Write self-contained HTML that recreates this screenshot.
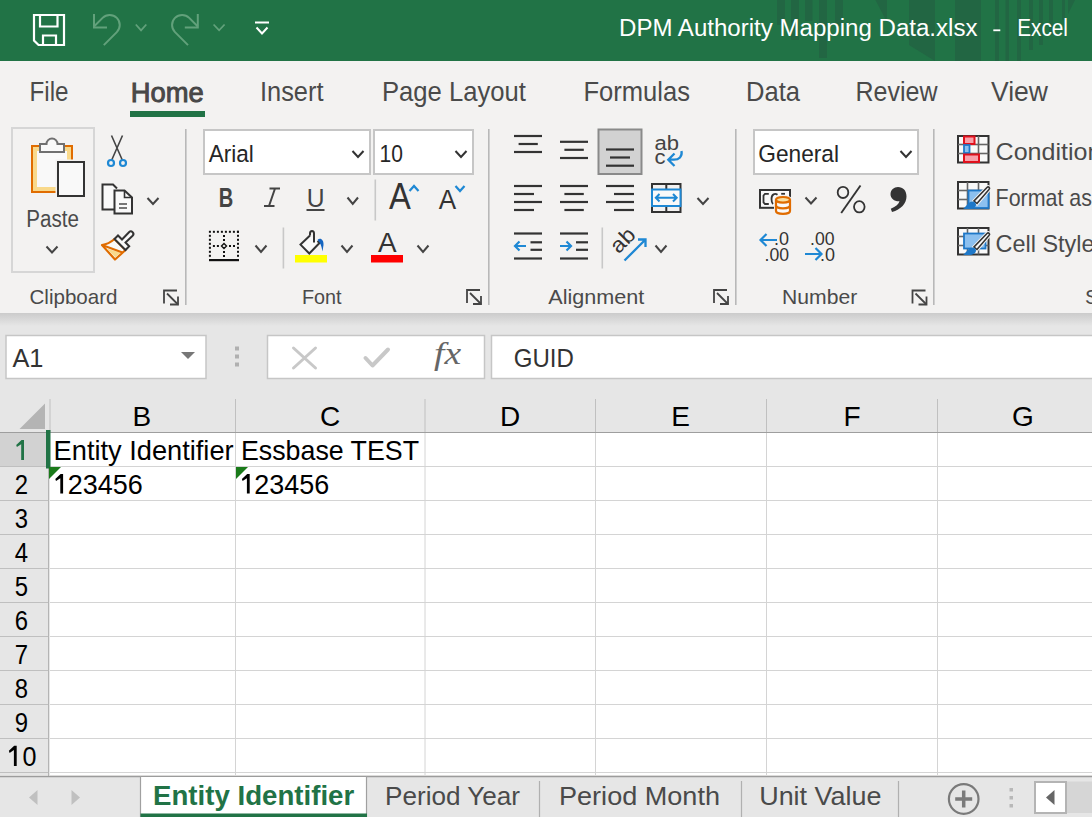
<!DOCTYPE html>
<html><head><meta charset="utf-8"><title>Excel</title>
<style>html,body{margin:0;padding:0;width:1092px;height:817px;overflow:hidden;background:#f3f2f1;font-family:"Liberation Sans",sans-serif;}</style>
</head><body><svg width="1092" height="817" viewBox="0 0 1092 817" font-family='"Liberation Sans", sans-serif' style="display:block"><rect x="0" y="0" width="1092" height="61" fill="#217346" />
<rect x="777" y="0" width="8" height="25" fill="#226643" />
<rect x="791" y="0" width="8" height="40" fill="#226643" />
<rect x="805" y="0" width="7.5" height="21" fill="#226643" />
<rect x="819" y="0" width="8" height="58" fill="#226643" />
<rect x="835" y="0" width="8" height="26" fill="#226643" />
<rect x="995" y="0" width="4" height="61" fill="#226643" />
<rect x="1005.5" y="0" width="3.5" height="61" fill="#226643" />
<rect x="1017" y="0" width="4" height="61" fill="#226643" />
<rect x="1029" y="0" width="4" height="50" fill="#226643" />
<rect x="1039" y="0" width="4" height="45" fill="#226643" />
<rect x="1049" y="0" width="4" height="35" fill="#226643" />
<rect x="1062" y="0" width="3" height="20" fill="#226643" />
<path d="M875.4,0 H887 V22 Z" stroke="none" stroke-width="1" fill="#226643" />
<path d="M909,0 H935 V61 L909,45 Z" stroke="none" stroke-width="1" fill="#226643" />
<rect x="955" y="0" width="26" height="61" fill="#226643" />
<path d="M1068,0 L1075,0 L1068,14 Z" stroke="none" stroke-width="1" fill="#226643" />
<path d="M34,15 H64 V45 H38.5 L34,40.5 Z" stroke="#fff" stroke-width="2.2" fill="none" />
<path d="M40,15 V26.5 H57.5 V15" stroke="#fff" stroke-width="2.2" fill="none" />
<path d="M43,45 V35.5 H56 V45" stroke="#fff" stroke-width="2.2" fill="none" />
<path d="M94,14 V27.5 H107" stroke="#62a17b" stroke-width="2" fill="none" />
<path d="M94,26.5 L102.6,17.9 A10,10 0 0 1 116.8,32.1 L103.8,45.1" stroke="#62a17b" stroke-width="2" fill="none" />
<path d="M197.8,14 V27.5 H184.8" stroke="#62a17b" stroke-width="2" fill="none" />
<path d="M197.8,26.5 L189.2,17.9 A10,10 0 0 0 175,32.1 L188,45.1" stroke="#62a17b" stroke-width="2" fill="none" />
<path d="M135.8,24.5 L141.05,30.3 L146.3,24.5" stroke="#62a17b" stroke-width="1.8" fill="none" stroke-linecap="butt" stroke-linejoin="miter"/>
<path d="M213.6,24.5 L219.1,30.3 L224.6,24.5" stroke="#62a17b" stroke-width="1.8" fill="none" stroke-linecap="butt" stroke-linejoin="miter"/>
<line x1="255" y1="22.5" x2="269" y2="22.5" stroke="#fff" stroke-width="2" />
<path d="M256.5,27.5 L262.0,33.5 L267.5,27.5" stroke="#fff" stroke-width="2" fill="none" stroke-linecap="butt" stroke-linejoin="miter"/>
<text x="619" y="36" font-size="23.5" fill="#ffffff" font-weight="normal" text-anchor="start" textLength="358.5" lengthAdjust="spacingAndGlyphs" >DPM Authority Mapping Data.xlsx</text>
<rect x="993.3" y="29.4" width="7" height="1.8" fill="#ffffff" />
<text x="1017.2" y="36" font-size="23.5" fill="#ffffff" font-weight="normal" text-anchor="start" textLength="50.8" lengthAdjust="spacingAndGlyphs" >Excel</text>
<rect x="0" y="61" width="1092" height="252" fill="#f3f2f1" />
<text x="29.5" y="101.3" font-size="27.5" fill="#4a4a4a" font-weight="normal" text-anchor="start" textLength="39" lengthAdjust="spacingAndGlyphs" >File</text>
<text x="260" y="101.3" font-size="27.5" fill="#4a4a4a" font-weight="normal" text-anchor="start" textLength="63.5" lengthAdjust="spacingAndGlyphs" >Insert</text>
<text x="382" y="101.3" font-size="27.5" fill="#4a4a4a" font-weight="normal" text-anchor="start" textLength="144" lengthAdjust="spacingAndGlyphs" >Page Layout</text>
<text x="583.5" y="101.3" font-size="27.5" fill="#4a4a4a" font-weight="normal" text-anchor="start" textLength="106.5" lengthAdjust="spacingAndGlyphs" >Formulas</text>
<text x="746" y="101.3" font-size="27.5" fill="#4a4a4a" font-weight="normal" text-anchor="start" textLength="54" lengthAdjust="spacingAndGlyphs" >Data</text>
<text x="855.5" y="101.3" font-size="27.5" fill="#4a4a4a" font-weight="normal" text-anchor="start" textLength="82" lengthAdjust="spacingAndGlyphs" >Review</text>
<text x="991" y="101.3" font-size="27.5" fill="#4a4a4a" font-weight="normal" text-anchor="start" textLength="57" lengthAdjust="spacingAndGlyphs" >View</text>
<text x="130.8" y="101.5" font-size="27.5" fill="#4a4a4a" font-weight="normal" text-anchor="start" textLength="73" lengthAdjust="spacingAndGlyphs" stroke="#444" stroke-width="0.9">Home</text>
<rect x="130" y="111" width="75" height="6" fill="#217346" />
<rect x="185" y="129" width="1.6" height="176" fill="#b8b8b8" />
<rect x="488" y="129" width="1.6" height="176" fill="#b8b8b8" />
<rect x="735" y="129" width="1.6" height="176" fill="#b8b8b8" />
<rect x="933" y="129" width="1.6" height="176" fill="#b8b8b8" />
<text x="29.5" y="303.6" font-size="21" fill="#4a4a4a" font-weight="normal" text-anchor="start" textLength="88" lengthAdjust="spacingAndGlyphs" >Clipboard</text>
<text x="302" y="303.6" font-size="21" fill="#4a4a4a" font-weight="normal" text-anchor="start" textLength="39.6" lengthAdjust="spacingAndGlyphs" >Font</text>
<text x="548.3" y="303.6" font-size="21" fill="#4a4a4a" font-weight="normal" text-anchor="start" textLength="96" lengthAdjust="spacingAndGlyphs" >Alignment</text>
<text x="782" y="303.8" font-size="21" fill="#4a4a4a" font-weight="normal" text-anchor="start" textLength="75.2" lengthAdjust="spacingAndGlyphs" >Number</text>
<text x="1085" y="303.8" font-size="21" fill="#4a4a4a" font-weight="normal" text-anchor="start" >S</text>
<path d="M164,303.5 V290.5 H177" stroke="#444444" stroke-width="1.8" fill="none" />
<path d="M167,293.5 L178,304.5" stroke="#444444" stroke-width="1.8" fill="none" />
<path d="M178,296.5 V304.5 H170" stroke="#444444" stroke-width="1.8" fill="none" />
<path d="M467,303 V290 H480" stroke="#444444" stroke-width="1.8" fill="none" />
<path d="M470,293 L481,304" stroke="#444444" stroke-width="1.8" fill="none" />
<path d="M481,296 V304 H473" stroke="#444444" stroke-width="1.8" fill="none" />
<path d="M714,303 V290 H727" stroke="#444444" stroke-width="1.8" fill="none" />
<path d="M717,293 L728,304" stroke="#444444" stroke-width="1.8" fill="none" />
<path d="M728,296 V304 H720" stroke="#444444" stroke-width="1.8" fill="none" />
<path d="M912.5,303.5 V290.5 H925.5" stroke="#444444" stroke-width="1.8" fill="none" />
<path d="M915.5,293.5 L926.5,304.5" stroke="#444444" stroke-width="1.8" fill="none" />
<path d="M926.5,296.5 V304.5 H918.5" stroke="#444444" stroke-width="1.8" fill="none" />
<rect x="12" y="128" width="82" height="144" fill="none" stroke="#d6d6d6" stroke-width="2"/>
<rect x="32" y="146" width="40" height="46" fill="#f9d98b" stroke="#e06c00" stroke-width="2"/>
<rect x="37" y="151" width="30" height="36" fill="#f9f9f9" />
<path d="M40,152 V144 H46.5 A5.5,5.5 0 0 1 57.5,144 H64 V152 Z" stroke="#707070" stroke-width="2" fill="#f9f9f9" />
<rect x="55.5" y="159.5" width="31" height="38.5" fill="#f3f2f1" />
<rect x="58" y="162" width="26" height="34" fill="#f9f9f9" stroke="#333" stroke-width="2"/>
<text x="26.3" y="227" font-size="23.5" fill="#4a4a4a" font-weight="normal" text-anchor="start" textLength="52.6" lengthAdjust="spacingAndGlyphs" >Paste</text>
<path d="M46.5,246.5 L52.0,252.5 L57.5,246.5" stroke="#444444" stroke-width="2" fill="none" stroke-linecap="butt" stroke-linejoin="miter"/>
<path d="M111.5,135.5 L122.5,160.5 M122.5,135.5 L111.5,160.5" stroke="#444444" stroke-width="1.6" fill="none" />
<circle cx="111" cy="163" r="3" fill="none" stroke="#1e88d4" stroke-width="2.2"/>
<circle cx="123" cy="163" r="3" fill="none" stroke="#1e88d4" stroke-width="2.2"/>
<path d="M115.5,209.5 H102.5 V184.5 H113 L117,188.5" stroke="#333" stroke-width="2" fill="#f9f9f9" />
<path d="M114.5,190.5 H124.5 L132,197.5 V213.5 H114.5 Z" stroke="#333" stroke-width="2" fill="#f9f9f9" />
<path d="M124.5,190.5 V197.5 H132" stroke="#333" stroke-width="1.6" fill="none" />
<line x1="119" y1="204" x2="127" y2="204" stroke="#555" stroke-width="1.6" />
<line x1="119" y1="208" x2="127" y2="208" stroke="#555" stroke-width="1.6" />
<path d="M147.5,198 L153.0,204 L158.5,198" stroke="#444444" stroke-width="2" fill="none" stroke-linecap="butt" stroke-linejoin="miter"/>
<path d="M114.5,239 C110,243 106,244.5 102,245 L115,259.5 L125.5,250 Z" stroke="#e06c00" stroke-width="2.2" fill="#f9f9f9" stroke-linejoin="round"/>
<path d="M106.5,248.5 L121,252.8 L115.3,257.3 Z" stroke="none" stroke-width="1" fill="#f9d98b" />
<path d="M102,245 L122.5,252.5" stroke="#e06c00" stroke-width="2" fill="none" />
<path d="M114.5,239 L118,235.5 L122,239.5 L129,232.2 C130,231.2 131.6,231.2 132.6,232.2 C133.6,233.2 133.6,234.8 132.6,235.8 L125.5,242.5 L129.2,246.3 L125.5,250 Z" stroke="#333" stroke-width="2" fill="#f9f9f9" />
<rect x="204" y="130" width="166" height="44" fill="#ffffff" stroke="#c6c6c6" stroke-width="2"/>
<rect x="374" y="130" width="99" height="44" fill="#ffffff" stroke="#c6c6c6" stroke-width="2"/>
<text x="208.7" y="161.5" font-size="24.5" fill="#262626" font-weight="normal" text-anchor="start" textLength="45" lengthAdjust="spacingAndGlyphs" >Arial</text>
<text x="379.6" y="161.5" font-size="24.5" fill="#262626" font-weight="normal" text-anchor="start" textLength="23.4" lengthAdjust="spacingAndGlyphs" >10</text>
<path d="M352.5,151 L358.0,157 L363.5,151" stroke="#333" stroke-width="2" fill="none" stroke-linecap="butt" stroke-linejoin="miter"/>
<path d="M455.5,151 L461.0,157 L466.5,151" stroke="#333" stroke-width="2" fill="none" stroke-linecap="butt" stroke-linejoin="miter"/>
<text x="218.8" y="206.6" font-size="27" fill="#444" font-weight="bold" text-anchor="start" textLength="14.5" lengthAdjust="spacingAndGlyphs" >B</text>
<path d="M269.5,188.5 H280 M264,206 H274.5 M275,188.5 L269,206" stroke="#444" stroke-width="2" fill="none" />
<text x="306.8" y="206.6" font-size="26" fill="#444" font-weight="normal" text-anchor="start" textLength="17.8" lengthAdjust="spacingAndGlyphs" >U</text>
<rect x="306.5" y="209" width="18" height="2" fill="#444" />
<path d="M347.5,197.5 L352.75,204 L358,197.5" stroke="#444444" stroke-width="2" fill="none" stroke-linecap="butt" stroke-linejoin="miter"/>
<rect x="374.5" y="179.5" width="1.6" height="41" fill="#c8c8c8" />
<text x="389" y="208.8" font-size="37.5" fill="#333" font-weight="normal" text-anchor="start" textLength="21.8" lengthAdjust="spacingAndGlyphs" >A</text>
<path d="M409.5,191 L414.0,186 L418.5,191" stroke="#1e88d4" stroke-width="2.2" fill="none" stroke-linecap="butt" stroke-linejoin="miter"/>
<text x="438.8" y="208.8" font-size="27.5" fill="#333" font-weight="normal" text-anchor="start" textLength="17.4" lengthAdjust="spacingAndGlyphs" >A</text>
<path d="M455.5,186 L460.0,191 L464.5,186" stroke="#1e88d4" stroke-width="2.2" fill="none" stroke-linecap="butt" stroke-linejoin="miter"/>
<rect x="216.9" y="230.8" width="2" height="2" fill="#111" />
<rect x="237" y="234.8" width="2" height="2" fill="#111" />
<rect x="223" y="255" width="2" height="2" fill="#111" />
<rect x="237" y="246.8" width="2" height="2" fill="#111" />
<rect x="212.9" y="245" width="2" height="2" fill="#111" />
<rect x="220.9" y="230.8" width="2" height="2" fill="#111" />
<rect x="208.9" y="234.8" width="2" height="2" fill="#111" />
<rect x="208.9" y="246.8" width="2" height="2" fill="#111" />
<rect x="224.9" y="230.8" width="2" height="2" fill="#111" />
<rect x="223" y="239" width="2" height="2" fill="#111" />
<rect x="237" y="230.8" width="2" height="2" fill="#111" />
<rect x="223" y="251" width="2" height="2" fill="#111" />
<rect x="237" y="242.8" width="2" height="2" fill="#111" />
<rect x="228.9" y="230.8" width="2" height="2" fill="#111" />
<rect x="216.9" y="245" width="2" height="2" fill="#111" />
<rect x="208.9" y="230.8" width="2" height="2" fill="#111" />
<rect x="237" y="254.8" width="2" height="2" fill="#111" />
<rect x="212.9" y="230.8" width="2" height="2" fill="#111" />
<rect x="208.9" y="242.8" width="2" height="2" fill="#111" />
<rect x="208.9" y="254.8" width="2" height="2" fill="#111" />
<rect x="229" y="245" width="2" height="2" fill="#111" />
<rect x="223" y="235" width="2" height="2" fill="#111" />
<rect x="232.9" y="230.8" width="2" height="2" fill="#111" />
<rect x="237" y="238.8" width="2" height="2" fill="#111" />
<rect x="236.9" y="230.8" width="2" height="2" fill="#111" />
<rect x="237" y="250.8" width="2" height="2" fill="#111" />
<rect x="208.9" y="238.8" width="2" height="2" fill="#111" />
<rect x="233" y="245" width="2" height="2" fill="#111" />
<rect x="208.9" y="250.8" width="2" height="2" fill="#111" />
<path d="M224,243.5 L226.5,246 L224,248.5 L221.5,246 Z" stroke="#111" stroke-width="1.4" fill="none" />
<rect x="209" y="259" width="30" height="2.2" fill="#111" />
<path d="M255.5,245.5 L261.0,252 L266.5,245.5" stroke="#444444" stroke-width="2" fill="none" stroke-linecap="butt" stroke-linejoin="miter"/>
<rect x="282.6" y="227.5" width="1.6" height="41" fill="#c8c8c8" />
<path d="M310,235.5 L300.5,244.6 L309.3,253.5 L319.5,243 L317.5,241" stroke="#333" stroke-width="2" fill="#f9f9f9" />
<path d="M310,235.5 V233.5 C310,230 314,230 314,233.5 V242.5" stroke="#333" stroke-width="2" fill="none" />
<path d="M317.5,240 C320,237 324,239.5 323.5,245 L322.5,251.5 C321.5,246 320.5,243 317.5,240 Z" stroke="none" stroke-width="1" fill="#1565c0" />
<rect x="295" y="255" width="32" height="7.5" fill="#ffff00" />
<path d="M341.5,245.5 L347.0,252 L352.5,245.5" stroke="#444444" stroke-width="2" fill="none" stroke-linecap="butt" stroke-linejoin="miter"/>
<text x="378" y="252.3" font-size="27.5" fill="#333" font-weight="normal" text-anchor="start" textLength="18.6" lengthAdjust="spacingAndGlyphs" >A</text>
<rect x="371" y="255" width="32" height="7.5" fill="#ff0000" />
<path d="M417.5,245.5 L423.0,252 L428.5,245.5" stroke="#444444" stroke-width="2" fill="none" stroke-linecap="butt" stroke-linejoin="miter"/>
<line x1="514" y1="136" x2="542" y2="136" stroke="#333" stroke-width="2.2" />
<line x1="518.6" y1="144" x2="537.8" y2="144" stroke="#333" stroke-width="2.2" />
<line x1="514" y1="152" x2="542" y2="152" stroke="#333" stroke-width="2.2" />
<line x1="560" y1="141.8" x2="588" y2="141.8" stroke="#333" stroke-width="2.2" />
<line x1="564.4" y1="149.8" x2="583.8" y2="149.8" stroke="#333" stroke-width="2.2" />
<line x1="560" y1="158" x2="588" y2="158" stroke="#333" stroke-width="2.2" />
<rect x="598.5" y="129.5" width="43" height="44.5" fill="#d2d2d2" stroke="#8a8a8a" stroke-width="2"/>
<line x1="606" y1="149.5" x2="634" y2="149.5" stroke="#333" stroke-width="2.2" />
<line x1="610" y1="157.5" x2="630" y2="157.5" stroke="#333" stroke-width="2.2" />
<line x1="606" y1="165.7" x2="634" y2="165.7" stroke="#333" stroke-width="2.2" />
<text x="654.5" y="150.3" font-size="20" fill="#444" font-weight="normal" text-anchor="start" textLength="24.5" lengthAdjust="spacingAndGlyphs" >ab</text>
<text x="654.5" y="164.4" font-size="20" fill="#444" font-weight="normal" text-anchor="start" textLength="11" lengthAdjust="spacingAndGlyphs" >c</text>
<path d="M681.5,151 C682.5,156.5 679,159.7 674,159.7 H668.5 M674.5,153.5 L668.3,159.7 L674.5,166" stroke="#1e88d4" stroke-width="2.3" fill="none" />
<line x1="514" y1="186" x2="542" y2="186" stroke="#333" stroke-width="2.2" />
<line x1="514" y1="194" x2="534" y2="194" stroke="#333" stroke-width="2.2" />
<line x1="514" y1="202" x2="542" y2="202" stroke="#333" stroke-width="2.2" />
<line x1="514" y1="210" x2="534" y2="210" stroke="#333" stroke-width="2.2" />
<line x1="560" y1="186" x2="588" y2="186" stroke="#333" stroke-width="2.2" />
<line x1="564.4" y1="194" x2="583.8" y2="194" stroke="#333" stroke-width="2.2" />
<line x1="560" y1="202" x2="588" y2="202" stroke="#333" stroke-width="2.2" />
<line x1="564.4" y1="210" x2="583.8" y2="210" stroke="#333" stroke-width="2.2" />
<line x1="606" y1="186" x2="634" y2="186" stroke="#333" stroke-width="2.2" />
<line x1="614" y1="194" x2="634" y2="194" stroke="#333" stroke-width="2.2" />
<line x1="606" y1="202" x2="634" y2="202" stroke="#333" stroke-width="2.2" />
<line x1="614" y1="210" x2="634" y2="210" stroke="#333" stroke-width="2.2" />
<rect x="652" y="184" width="28.5" height="28" fill="none" stroke="#333" stroke-width="2"/>
<line x1="666.3" y1="184" x2="666.3" y2="212" stroke="#333" stroke-width="2" />
<rect x="652" y="189.5" width="28.5" height="16.5" fill="#f9f9f9" stroke="#1e88d4" stroke-width="2"/>
<path d="M656,197.75 H676.5 M659.5,194 L655.8,197.75 L659.5,201.5 M673,194 L676.7,197.75 L673,201.5" stroke="#1e88d4" stroke-width="2" fill="none" />
<path d="M697.5,198 L703.0,204 L708.5,198" stroke="#444444" stroke-width="2" fill="none" stroke-linecap="butt" stroke-linejoin="miter"/>
<line x1="514" y1="233.5" x2="542" y2="233.5" stroke="#333" stroke-width="2.2" />
<line x1="530.5" y1="242.3" x2="542" y2="242.3" stroke="#333" stroke-width="2.2" />
<line x1="530.5" y1="249.8" x2="542" y2="249.8" stroke="#333" stroke-width="2.2" />
<line x1="514" y1="258.5" x2="542" y2="258.5" stroke="#333" stroke-width="2.2" />
<path d="M526,246 H515 M519.5,241.5 L515,246 L519.5,250.5" stroke="#1e88d4" stroke-width="2.2" fill="none" />
<line x1="560" y1="233.5" x2="588" y2="233.5" stroke="#333" stroke-width="2.2" />
<line x1="576" y1="242.3" x2="588" y2="242.3" stroke="#333" stroke-width="2.2" />
<line x1="576" y1="249.8" x2="588" y2="249.8" stroke="#333" stroke-width="2.2" />
<line x1="560" y1="258.5" x2="588" y2="258.5" stroke="#333" stroke-width="2.2" />
<path d="M560,246 H571 M566.5,241.5 L571,246 L566.5,250.5" stroke="#1e88d4" stroke-width="2.2" fill="none" />
<rect x="601.5" y="227.5" width="1.6" height="41" fill="#c8c8c8" />
<text x="0" y="0" font-size="21.5" fill="#333" font-weight="normal" text-anchor="start" textLength="26" lengthAdjust="spacingAndGlyphs" transform="translate(618.5,254.5) rotate(-45)">ab</text>
<path d="M624.5,260.5 L645.5,239.5 M638,239.5 H645.5 V247" stroke="#1e88d4" stroke-width="2.3" fill="none" />
<path d="M655.5,245.5 L661.0,252 L666.5,245.5" stroke="#444444" stroke-width="2" fill="none" stroke-linecap="butt" stroke-linejoin="miter"/>
<rect x="754" y="130" width="164" height="44" fill="#ffffff" stroke="#c6c6c6" stroke-width="2"/>
<text x="758.3" y="161.6" font-size="24.5" fill="#262626" font-weight="normal" text-anchor="start" textLength="80.7" lengthAdjust="spacingAndGlyphs" >General</text>
<path d="M900.5,151 L906.0,157 L911.5,151" stroke="#333" stroke-width="2" fill="none" stroke-linecap="butt" stroke-linejoin="miter"/>
<rect x="760" y="190" width="30" height="17.8" fill="#f9f9f9" stroke="#333" stroke-width="2"/>
<path d="M768.8,193.8 H765 L763.5,195.5 V202.5 L765,204 H768.8" stroke="#333" stroke-width="1.8" fill="none" />
<path d="M777.5,194.8 C775,193 771.5,194 771.5,199 C771.5,202 772.5,203.5 773,204" stroke="#333" stroke-width="1.8" fill="none" />
<line x1="781.2" y1="193.8" x2="785" y2="193.8" stroke="#333" stroke-width="1.8" />
<path d="M776,199.8 V211 A7,2.8 0 0 0 790,211 V199.8 A7,2.8 0 0 0 776,199.8" stroke="#f3f2f1" stroke-width="4" fill="#f9f9f9" />
<path d="M776,199.8 V211 A7,2.8 0 0 0 790,211 V199.8" stroke="#e06c00" stroke-width="2.2" fill="#f9f9f9" />
<ellipse cx="783" cy="199.8" rx="7" ry="2.8" fill="#f9e0a0" stroke="#e06c00" stroke-width="2.2"/>
<path d="M776,205.5 A7,2.8 0 0 0 790,205.5" stroke="#e06c00" stroke-width="2.2" fill="none" />
<path d="M805.5,197.5 L811.0,203.5 L816.5,197.5" stroke="#444444" stroke-width="2" fill="none" stroke-linecap="butt" stroke-linejoin="miter"/>
<ellipse cx="843" cy="192.4" rx="5.3" ry="5.6" fill="none" stroke="#333" stroke-width="1.8"/>
<ellipse cx="859.3" cy="206.8" rx="5.3" ry="5.6" fill="none" stroke="#333" stroke-width="1.8"/>
<line x1="860.5" y1="185.5" x2="841.2" y2="213" stroke="#333" stroke-width="1.9" />
<path d="M898,187 C903,187 906.5,190.5 906.5,196.5 C906.5,203.5 901,209.5 892,212 L890.8,208.8 C896,206.5 898.8,204 899.5,201.2 C894.5,201.5 890.5,198.5 890.5,194.2 C890.5,190 894,187 898,187 Z" stroke="none" stroke-width="1" fill="#333" />
<text x="774" y="244.7" font-size="18" fill="#333" font-weight="normal" text-anchor="start" textLength="15" lengthAdjust="spacingAndGlyphs" >.0</text>
<text x="764.5" y="260.7" font-size="18" fill="#333" font-weight="normal" text-anchor="start" textLength="24.5" lengthAdjust="spacingAndGlyphs" >.00</text>
<path d="M777,240 H761 M766.5,234 L760.5,240 L766.5,246" stroke="#1e88d4" stroke-width="2.2" fill="none" />
<text x="810" y="244.7" font-size="18" fill="#333" font-weight="normal" text-anchor="start" textLength="24.5" lengthAdjust="spacingAndGlyphs" >.00</text>
<text x="820" y="260.7" font-size="18" fill="#333" font-weight="normal" text-anchor="start" textLength="15" lengthAdjust="spacingAndGlyphs" >.0</text>
<path d="M805,254 H821.5 M815.5,248 L821.5,254 L815.5,260" stroke="#1e88d4" stroke-width="2.2" fill="none" />
<rect x="958" y="136" width="30.5" height="26.5" fill="#f9f9f9" stroke="#333" stroke-width="2"/>
<line x1="967.5" y1="136" x2="967.5" y2="162.5" stroke="#666" stroke-width="1.6" />
<line x1="978.5" y1="136" x2="978.5" y2="162.5" stroke="#666" stroke-width="1.6" />
<line x1="958" y1="144.5" x2="988.5" y2="144.5" stroke="#666" stroke-width="1.6" />
<line x1="958" y1="153.5" x2="988.5" y2="153.5" stroke="#666" stroke-width="1.6" />
<rect x="964" y="136.5" width="10.5" height="7.5" fill="#f8a0aa" stroke="#e0101c" stroke-width="2"/>
<rect x="964" y="145" width="5.5" height="8" fill="#8cc0ef" stroke="#1e78c8" stroke-width="1.8"/>
<rect x="964" y="154.5" width="15" height="7.5" fill="#f8a0aa" stroke="#e0101c" stroke-width="2"/>
<text x="995.6" y="160" font-size="24" fill="#4a4a4a" font-weight="normal" text-anchor="start" textLength="252" lengthAdjust="spacingAndGlyphs" >Conditional Formatting</text>
<rect x="958" y="182" width="30.5" height="26.5" fill="#f9f9f9" stroke="#333" stroke-width="2"/>
<line x1="967.5" y1="182" x2="967.5" y2="208.5" stroke="#666" stroke-width="1.6" />
<line x1="978.5" y1="182" x2="978.5" y2="208.5" stroke="#666" stroke-width="1.6" />
<line x1="958" y1="190.5" x2="988.5" y2="190.5" stroke="#666" stroke-width="1.6" />
<line x1="958" y1="199.5" x2="988.5" y2="199.5" stroke="#666" stroke-width="1.6" />
<rect x="968.5" y="190.5" width="20" height="17.5" fill="#8cc0ef" stroke="#1e78c8" stroke-width="1.8"/>
<path d="M987,187.5 C988.5,186 990.5,188 989,189.5 L977,203.5 L974,201 Z" stroke="#f3f2f1" stroke-width="3.5" fill="#f9f9f9" />
<path d="M987,187.5 C988.5,186 990.5,188 989,189.5 L977,203.5 L974,201 Z" stroke="#333" stroke-width="1.6" fill="#f9f9f9" />
<path d="M963,208.5 C966,207.5 968,201 973,201.5 C976,202 977,205 975,207 C972,209.5 967,209.5 963,208.5 Z" stroke="none" stroke-width="1" fill="#1e78c8" />
<text x="995.6" y="205.7" font-size="24" fill="#4a4a4a" font-weight="normal" text-anchor="start" textLength="153" lengthAdjust="spacingAndGlyphs" >Format as Table</text>
<rect x="958" y="228" width="30.5" height="26.5" fill="#f9f9f9" stroke="#333" stroke-width="2"/>
<line x1="967.5" y1="228" x2="967.5" y2="254.5" stroke="#666" stroke-width="1.6" />
<line x1="978.5" y1="228" x2="978.5" y2="254.5" stroke="#666" stroke-width="1.6" />
<line x1="958" y1="236.5" x2="988.5" y2="236.5" stroke="#666" stroke-width="1.6" />
<line x1="958" y1="245.5" x2="988.5" y2="245.5" stroke="#666" stroke-width="1.6" />
<rect x="964" y="233.5" width="21.5" height="15" fill="#8cc0ef" stroke="#1e78c8" stroke-width="1.8"/>
<path d="M987,233.5 C988.5,232 990.5,234 989,235.5 L977,249.5 L974,247 Z" stroke="#f3f2f1" stroke-width="3.5" fill="#f9f9f9" />
<path d="M987,233.5 C988.5,232 990.5,234 989,235.5 L977,249.5 L974,247 Z" stroke="#333" stroke-width="1.6" fill="#f9f9f9" />
<path d="M963,254.5 C966,253.5 968,247 973,247.5 C976,248 977,251 975,253 C972,255.5 967,255.5 963,254.5 Z" stroke="none" stroke-width="1" fill="#1e78c8" />
<text x="995.6" y="251.5" font-size="24" fill="#4a4a4a" font-weight="normal" text-anchor="start" textLength="110.6" lengthAdjust="spacingAndGlyphs" >Cell Styles</text>
<rect x="0" y="313" width="1092" height="87" fill="#e6e6e6" />
<defs><linearGradient id="sh" x1="0" y1="0" x2="0" y2="1"><stop offset="0" stop-color="#cbcbcb"/><stop offset="1" stop-color="#e6e6e6"/></linearGradient></defs>
<rect x="0" y="313" width="1092" height="13" fill="url(#sh)" />
<rect x="6" y="335.5" width="200" height="43" fill="#ffffff" stroke="#c6c6c6" stroke-width="1.5"/>
<text x="12.4" y="366.8" font-size="25" fill="#333" font-weight="normal" text-anchor="start" textLength="31" lengthAdjust="spacingAndGlyphs" >A1</text>
<path d="M181,352 H195 L188,359 Z" stroke="none" stroke-width="1" fill="#777" />
<rect x="235" y="346.5" width="4" height="4" fill="#b0b0b0" />
<rect x="235" y="354.5" width="4" height="4" fill="#b0b0b0" />
<rect x="235" y="362.5" width="4" height="4" fill="#b0b0b0" />
<rect x="267.5" y="335.5" width="217" height="43" fill="#ffffff" stroke="#c6c6c6" stroke-width="1.5"/>
<path d="M293.5,348 L315.5,368 M315.5,348 L293.5,368" stroke="#c8c8c8" stroke-width="3" fill="none" stroke-linecap="round"/>
<path d="M365.5,358 L372.5,365.5 L388,349.5" stroke="#c8c8c8" stroke-width="4" fill="none" stroke-linecap="round" stroke-linejoin="round"/>
<text x="434" y="363.7" font-size="31" fill="#666" font-weight="normal" text-anchor="start" font-family='"Liberation Serif", serif' textLength="27" lengthAdjust="spacingAndGlyphs" font-style="italic">fx</text>
<rect x="491.5" y="335.5" width="620" height="43" fill="#ffffff" stroke="#c6c6c6" stroke-width="1.5"/>
<text x="513.7" y="367" font-size="25" fill="#333" font-weight="normal" text-anchor="start" textLength="60.1" lengthAdjust="spacingAndGlyphs" >GUID</text>
<rect x="0" y="399" width="1092" height="34" fill="#e6e6e6" />
<rect x="50" y="433" width="1042" height="342" fill="#ffffff" />
<rect x="0" y="433" width="50" height="342" fill="#e6e6e6" />
<rect x="0" y="433" width="47" height="34" fill="#d2d2d2" />
<line x1="50" y1="466.5" x2="1092" y2="466.5" stroke="#d4d4d4" stroke-width="1" />
<line x1="0" y1="466.5" x2="48" y2="466.5" stroke="#bfbfbf" stroke-width="1" />
<line x1="50" y1="500.5" x2="1092" y2="500.5" stroke="#d4d4d4" stroke-width="1" />
<line x1="0" y1="500.5" x2="48" y2="500.5" stroke="#bfbfbf" stroke-width="1" />
<line x1="50" y1="534.5" x2="1092" y2="534.5" stroke="#d4d4d4" stroke-width="1" />
<line x1="0" y1="534.5" x2="48" y2="534.5" stroke="#bfbfbf" stroke-width="1" />
<line x1="50" y1="568.5" x2="1092" y2="568.5" stroke="#d4d4d4" stroke-width="1" />
<line x1="0" y1="568.5" x2="48" y2="568.5" stroke="#bfbfbf" stroke-width="1" />
<line x1="50" y1="602.5" x2="1092" y2="602.5" stroke="#d4d4d4" stroke-width="1" />
<line x1="0" y1="602.5" x2="48" y2="602.5" stroke="#bfbfbf" stroke-width="1" />
<line x1="50" y1="636.5" x2="1092" y2="636.5" stroke="#d4d4d4" stroke-width="1" />
<line x1="0" y1="636.5" x2="48" y2="636.5" stroke="#bfbfbf" stroke-width="1" />
<line x1="50" y1="670.5" x2="1092" y2="670.5" stroke="#d4d4d4" stroke-width="1" />
<line x1="0" y1="670.5" x2="48" y2="670.5" stroke="#bfbfbf" stroke-width="1" />
<line x1="50" y1="704.5" x2="1092" y2="704.5" stroke="#d4d4d4" stroke-width="1" />
<line x1="0" y1="704.5" x2="48" y2="704.5" stroke="#bfbfbf" stroke-width="1" />
<line x1="50" y1="738.5" x2="1092" y2="738.5" stroke="#d4d4d4" stroke-width="1" />
<line x1="0" y1="738.5" x2="48" y2="738.5" stroke="#bfbfbf" stroke-width="1" />
<line x1="50" y1="772.5" x2="1092" y2="772.5" stroke="#d4d4d4" stroke-width="1" />
<line x1="0" y1="772.5" x2="48" y2="772.5" stroke="#bfbfbf" stroke-width="1" />
<line x1="235.5" y1="433" x2="235.5" y2="775" stroke="#d4d4d4" stroke-width="1" />
<line x1="235.5" y1="399" x2="235.5" y2="433" stroke="#c0c0c0" stroke-width="1" />
<line x1="425" y1="433" x2="425" y2="775" stroke="#d4d4d4" stroke-width="1" />
<line x1="425" y1="399" x2="425" y2="433" stroke="#c0c0c0" stroke-width="1" />
<line x1="595.5" y1="433" x2="595.5" y2="775" stroke="#d4d4d4" stroke-width="1" />
<line x1="595.5" y1="399" x2="595.5" y2="433" stroke="#c0c0c0" stroke-width="1" />
<line x1="766.5" y1="433" x2="766.5" y2="775" stroke="#d4d4d4" stroke-width="1" />
<line x1="766.5" y1="399" x2="766.5" y2="433" stroke="#c0c0c0" stroke-width="1" />
<line x1="937.5" y1="433" x2="937.5" y2="775" stroke="#d4d4d4" stroke-width="1" />
<line x1="937.5" y1="399" x2="937.5" y2="433" stroke="#c0c0c0" stroke-width="1" />
<line x1="50" y1="399" x2="50" y2="433" stroke="#c0c0c0" stroke-width="1" />
<line x1="48.5" y1="433" x2="48.5" y2="776" stroke="#b4b4b4" stroke-width="1" />
<line x1="0" y1="432.5" x2="1092" y2="432.5" stroke="#9e9e9e" stroke-width="1" />
<path d="M19.5,429 L45,429 L45,403.5 Z" stroke="none" stroke-width="1" fill="#b4b4b4" />
<rect x="46" y="430" width="4.5" height="38.5" fill="#217346" />
<text x="141.8" y="426.3" font-size="28" fill="#000" font-weight="normal" text-anchor="middle" >B</text>
<text x="330" y="426.3" font-size="28" fill="#000" font-weight="normal" text-anchor="middle" >C</text>
<text x="510" y="426.3" font-size="28" fill="#000" font-weight="normal" text-anchor="middle" >D</text>
<text x="680.5" y="426.3" font-size="28" fill="#000" font-weight="normal" text-anchor="middle" >E</text>
<text x="852" y="426.3" font-size="28" fill="#000" font-weight="normal" text-anchor="middle" >F</text>
<text x="1023" y="426.3" font-size="28" fill="#000" font-weight="normal" text-anchor="middle" >G</text>
<path d="M24,440 V460 H21.2 V444.3 L16.9,447.1 L16.2,444.9 L21.5,440 Z" stroke="none" stroke-width="1" fill="#217346" />
<text x="21.5" y="493.8" font-size="28.5" fill="#000" font-weight="normal" text-anchor="middle" textLength="13.3" lengthAdjust="spacingAndGlyphs" >2</text>
<text x="21.5" y="527.8" font-size="28.5" fill="#000" font-weight="normal" text-anchor="middle" textLength="13.3" lengthAdjust="spacingAndGlyphs" >3</text>
<text x="21.5" y="561.8" font-size="28.5" fill="#000" font-weight="normal" text-anchor="middle" textLength="13.3" lengthAdjust="spacingAndGlyphs" >4</text>
<text x="21.5" y="595.8" font-size="28.5" fill="#000" font-weight="normal" text-anchor="middle" textLength="13.3" lengthAdjust="spacingAndGlyphs" >5</text>
<text x="21.5" y="629.8" font-size="28.5" fill="#000" font-weight="normal" text-anchor="middle" textLength="13.3" lengthAdjust="spacingAndGlyphs" >6</text>
<text x="21.5" y="663.8" font-size="28.5" fill="#000" font-weight="normal" text-anchor="middle" textLength="13.3" lengthAdjust="spacingAndGlyphs" >7</text>
<text x="21.5" y="697.8" font-size="28.5" fill="#000" font-weight="normal" text-anchor="middle" textLength="13.3" lengthAdjust="spacingAndGlyphs" >8</text>
<text x="21.5" y="731.8" font-size="28.5" fill="#000" font-weight="normal" text-anchor="middle" textLength="13.3" lengthAdjust="spacingAndGlyphs" >9</text>
<path d="M16.7,745.8 V765.9 H13.899999999999999 V750.0999999999999 L9.6,752.9 L8.899999999999999,750.6999999999999 L14.2,745.8 Z" stroke="none" stroke-width="1" fill="#000" />
<text x="22.4" y="765.9" font-size="28.5" fill="#000" font-weight="normal" text-anchor="start" textLength="14" lengthAdjust="spacingAndGlyphs" >0</text>
<text x="53.6" y="460.2" font-size="28.5" fill="#000" font-weight="normal" text-anchor="start" textLength="180" lengthAdjust="spacingAndGlyphs" >Entity Identifier</text>
<text x="241" y="460.2" font-size="28.5" fill="#000" font-weight="normal" text-anchor="start" textLength="178" lengthAdjust="spacingAndGlyphs" >Essbase TEST</text>
<path d="M63.1,474 V493.6 H60.300000000000004 V478.3 L56.0,481.1 L55.300000000000004,478.9 L60.6,474 Z" stroke="none" stroke-width="1" fill="#000" />
<text x="67.7" y="493.6" font-size="28.5" fill="#000" font-weight="normal" text-anchor="start" textLength="75" lengthAdjust="spacingAndGlyphs" >23456</text>
<path d="M249.7,474 V493.6 H246.89999999999998 V478.3 L242.6,481.1 L241.89999999999998,478.9 L247.2,474 Z" stroke="none" stroke-width="1" fill="#000" />
<text x="254.3" y="493.6" font-size="28.5" fill="#000" font-weight="normal" text-anchor="start" textLength="75" lengthAdjust="spacingAndGlyphs" >23456</text>
<path d="M49,467 H61 L49,479 Z" stroke="none" stroke-width="1" fill="#1a7a1a" />
<path d="M236,467 H248 L236,479 Z" stroke="none" stroke-width="1" fill="#1a7a1a" />
<rect x="0" y="776" width="1092" height="41" fill="#e6e6e6" />
<line x1="0" y1="776.5" x2="1092" y2="776.5" stroke="#9c9c9c" stroke-width="1.3" />
<path d="M37.5,790 L29,797.5 L37.5,805 Z" stroke="none" stroke-width="1" fill="#c0c0c0" />
<path d="M71.5,790 L80,797.5 L71.5,805 Z" stroke="none" stroke-width="1" fill="#c0c0c0" />
<rect x="140.5" y="777" width="226.5" height="40" fill="#ffffff" />
<line x1="140.5" y1="776" x2="140.5" y2="817" stroke="#a0a0a0" stroke-width="1.2" />
<line x1="366.5" y1="776" x2="366.5" y2="817" stroke="#a0a0a0" stroke-width="1.2" />
<rect x="140.5" y="813.5" width="226.5" height="3.5" fill="#217346" />
<text x="153" y="805.4" font-size="27" fill="#217346" font-weight="bold" text-anchor="start" textLength="201.2" lengthAdjust="spacingAndGlyphs" >Entity Identifier</text>
<text x="385" y="805.2" font-size="26.5" fill="#4a4a4a" font-weight="normal" text-anchor="start" textLength="135" lengthAdjust="spacingAndGlyphs" >Period Year</text>
<line x1="539.5" y1="781" x2="539.5" y2="817" stroke="#b0b0b0" stroke-width="1.2" />
<text x="559" y="805.2" font-size="26.5" fill="#4a4a4a" font-weight="normal" text-anchor="start" textLength="161" lengthAdjust="spacingAndGlyphs" >Period Month</text>
<line x1="741.5" y1="781" x2="741.5" y2="817" stroke="#b0b0b0" stroke-width="1.2" />
<text x="759.2" y="805.2" font-size="26.5" fill="#4a4a4a" font-weight="normal" text-anchor="start" textLength="122.3" lengthAdjust="spacingAndGlyphs" >Unit Value</text>
<line x1="898.5" y1="781" x2="898.5" y2="817" stroke="#b0b0b0" stroke-width="1.2" />
<circle cx="963.7" cy="799" r="14.8" fill="none" stroke="#7a7a7a" stroke-width="2.2"/>
<path d="M963.7,790.5 V807.5 M955.2,799 H972.2" stroke="#7a7a7a" stroke-width="3.5" fill="none" />
<rect x="1009.5" y="788" width="3.5" height="3.5" fill="#b8b8b8" />
<rect x="1009.5" y="796" width="3.5" height="3.5" fill="#b8b8b8" />
<rect x="1009.5" y="804" width="3.5" height="3.5" fill="#b8b8b8" />
<rect x="1066.5" y="781.5" width="26" height="31.5" fill="#d6d6d6" />
<rect x="1035" y="782" width="31" height="31" fill="#ffffff" stroke="#b4b4b4" stroke-width="2"/>
<path d="M1054.5,790 L1046,797.5 L1054.5,805 Z" stroke="none" stroke-width="1" fill="#666" /></svg></body></html>
